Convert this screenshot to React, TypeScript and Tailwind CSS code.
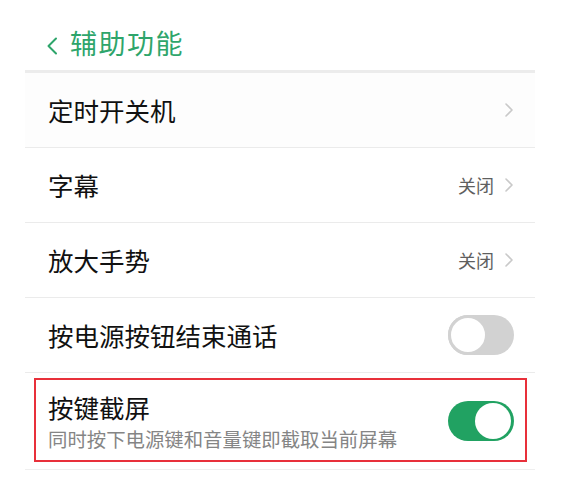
import React from "react";

const font = { fontFamily: '"Noto Sans CJK SC", "Noto Sans", sans-serif' };

function Chevron() {
  return (
    <svg width="10" height="16" viewBox="0 0 10 16" className="ml-[10px]">
      <path d="M2 2 L8 8 L2 14" fill="none" stroke="#c9c9c9" strokeWidth="1.6" strokeLinecap="round" strokeLinejoin="round" />
    </svg>
  );
}

function Toggle({ on }: { on: boolean }) {
  if (on) {
    return (
      <div className="w-[66px] h-[40px] rounded-full bg-[#21a262] flex items-center justify-end p-[3px]">
        <div className="w-[36px] h-[36px] rounded-full bg-white" />
      </div>
    );
  }
  return (
    <div className="w-[66px] h-[40px] rounded-full bg-[#d2d2d2] flex items-center justify-start">
      <div className="w-[40px] h-[40px] rounded-full bg-white border-[3px] border-[#d2d2d2]" />
    </div>
  );
}

function Row({ title, value, chevron, toggle }: { title: string; value?: string; chevron?: boolean; toggle?: boolean | null }) {
  return (
    <div className="h-[75px] border-b border-[#ebebeb] flex items-center pl-[23px] pr-[21px]">
      <div className="flex-1 text-[25.5px] leading-none text-[#111111]">{title}</div>
      {value && <div className="text-[18px] leading-none text-[#5f5f5f]">{value}</div>}
      {chevron && <Chevron />}
      {toggle !== undefined && toggle !== null && <Toggle on={toggle} />}
    </div>
  );
}

export default function App() {
  return (
    <div className="w-[580px] h-[481px] bg-white overflow-hidden" style={font}>
      <div className="h-[70px] pl-[46px] pt-[29px] flex items-start">
        <svg width="12" height="18" viewBox="0 0 12 18" className="mt-[8px]">
          <path d="M10 1.5 L2.5 9 L10 16.5" fill="none" stroke="#2ea56b" strokeWidth="2" strokeLinecap="round" strokeLinejoin="round" />
        </svg>
        <div className="ml-[12px] text-[27px] leading-none text-[#2ea56b] tracking-[1.5px]">辅助功能</div>
      </div>
      <div className="ml-[25px] w-[510px]">
        <div className="h-[3px] bg-[#ececec]" />
        <div className="h-[75px] border-b border-[#ebebeb] flex items-center pl-[23px] pr-[21px] bg-[#fdfdfd]">
          <div className="flex-1 text-[25.5px] leading-none text-[#111111]">定时开关机</div>
          <Chevron />
        </div>
        <Row title="字幕" value="关闭" chevron />
        <Row title="放大手势" value="关闭" chevron />
        <Row title="按电源按钮结束通话" toggle={false} />
        <div className="relative h-[97px] border-b border-[#efefef] flex items-center pl-[23px] pr-[21px]">
          <div className="flex-1 flex flex-col">
            <div className="text-[25.5px] leading-none text-[#111111]">按键截屏</div>
            <div className="mt-[9px] text-[19.4px] leading-none text-[#858585]">同时按下电源键和音量键即截取当前屏幕</div>
          </div>
          <Toggle on />
          <div className="absolute left-[9px] top-[5px] w-[493px] h-[84px] border-2 border-[#e8303a] pointer-events-none" />
        </div>
      </div>
    </div>
  );
}
